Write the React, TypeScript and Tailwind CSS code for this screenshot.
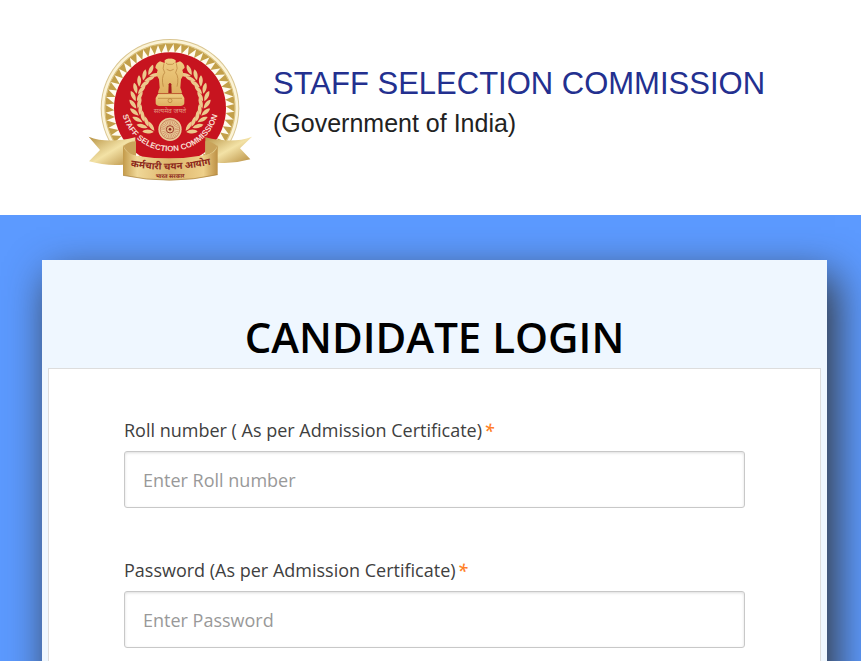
const teeth = Array.from({ length: 52 }, (_, i) => (i * 360) / 52);
const leaves = Array.from({ length: 10 }, (_, i) => i);

function Laurel() {
  return (
    <g fill="#ecc98c">
      {leaves.map((i) => (
        <g key={i} transform={`rotate(${30 + i * 12.5} 270 215)`}>
          <g transform="translate(270 316)">
            <path d="M3 2C-4 13 -14 20 -27 18C-24 8 -13 0 3 2Z" />
            <path d="M3 -2C-4 -13 -14 -19 -27 -18C-24 -8 -13 0 3 -2Z" />
          </g>
        </g>
      ))}
    </g>
  );
}

function Emblem() {
  return (
    <svg viewBox="0 0 540 480" className="h-40 w-[180px] shrink-0" role="img" aria-label="Staff Selection Commission emblem">
      <defs>
        <linearGradient id="ribbon" x1="0" x2="1" y1="0" y2="0">
          <stop offset="0" stopColor="#c39a4a" />
          <stop offset="0.15" stopColor="#f0d898" />
          <stop offset="0.5" stopColor="#dcb46c" />
          <stop offset="0.85" stopColor="#eed08a" />
          <stop offset="1" stopColor="#bd9044" />
        </linearGradient>
        <linearGradient id="tail" x1="0" x2="1" y1="0" y2="1">
          <stop offset="0" stopColor="#b79345" />
          <stop offset="0.5" stopColor="#f3e2a6" />
          <stop offset="1" stopColor="#b58a3c" />
        </linearGradient>
        <linearGradient id="lion" x1="0" x2="0" y1="0" y2="1">
          <stop offset="0" stopColor="#efce83" />
          <stop offset="1" stopColor="#dfb060" />
        </linearGradient>
        <clipPath id="disc">
          <rect width="540" height="392" />
        </clipPath>
        <path id="motto" d="M122 216A148 148 0 0 0 418 216" />
        <path id="hindi" d="M138 407Q270 434 406 400" />
        <path id="hindiSmall" d="M190 441Q270 448 350 440" />
      </defs>

      <g clipPath="url(#disc)">
        <circle cx="270" cy="235" r="208" fill="#d9c590" />
        <circle cx="270" cy="235" r="205" fill="#fbf3d6" />
        <circle cx="270" cy="235" r="197" fill="#d9bf78" />
        <circle cx="270" cy="235" r="194" fill="#fffbee" />
        {teeth.map((a) => (
          <path key={a} d="M257 41H281L264 68Z" fill="#c3a04a" transform={`rotate(${a} 270 235)`} />
        ))}
        <circle cx="270" cy="235" r="168" fill="#c7141f" />
      </g>

      <Laurel />
      <g transform="translate(540 0) scale(-1 1)">
        <Laurel />
      </g>

      <g fill="url(#lion)">
        <path d="M254 91Q260 85 270 86Q280 85 287 91L287 99L300 94Q313 101 314 113L307 120L311 134L303 148L301 173Q305 182 306 190H234Q235 182 239 173L237 148L229 134L233 120L226 113Q227 101 240 94L254 99Z" />
        <path d="M234 192H306L313 204L313 218Q314 225 303 228H237Q226 225 227 218L227 204Z" />
      </g>
      <g fill="none" stroke="#b57d38" strokeWidth="2">
        <path d="M252 100Q246 116 254 128Q243 142 250 170M289 100Q295 116 287 128Q298 142 291 170" />
        <path d="M258 99Q263 105 270 103Q278 105 283 99M260 118Q270 127 281 118" />
        <path d="M236 191H304M234 205H306" />
        <circle cx="270" cy="212" r="6" />
      </g>
      <path d="M266 163Q270 155 274 163L275 189H265Z" fill="#a51c1d" />

      <text x="270" y="250" textAnchor="middle" fill="#e39a85" fontSize="20" fontFamily="Noto Sans, sans-serif">
        सत्यमेव जयते
      </text>

      <circle cx="270" cy="298" r="39" fill="#c7141f" />
      <circle cx="270" cy="298" r="35" fill="#eacb99" />
      <circle cx="270" cy="298" r="29" fill="none" stroke="#b4603c" strokeWidth="2" />
      <circle cx="270" cy="298" r="20" fill="none" stroke="#c98b62" strokeWidth="13" strokeDasharray="2 3" />
      <circle cx="270" cy="298" r="11" fill="#e6bd88" stroke="#9d3d2b" strokeWidth="3" />
      <circle cx="270" cy="298" r="4" fill="#8c241f" />

      <text fill="#f7ddd0" fontSize="24" fontWeight="700" fontFamily="Liberation Sans, sans-serif">
        <textPath href="#motto" startOffset="50%" textAnchor="middle">
          STAFF SELECTION COMMISSION
        </textPath>
      </text>

      <path d="M26 320Q82 342 166 322V374L130 404Q76 408 27 394L60 360Z" fill="url(#tail)" />
      <path d="M516 320Q458 342 376 322V374L412 398Q462 402 511 388L480 355Z" fill="url(#tail)" />
      <path d="M130 348Q146 334 168 334V378Q140 370 130 348Z" fill="#c9a35a" />
      <path d="M412 348Q396 334 376 334V376Q402 370 412 348Z" fill="#c9a35a" />
      <path d="M129 345Q134 371 168 377Q270 394 378 375Q410 369 413 345V434Q270 466 129 436Z" fill="url(#ribbon)" />
      <path d="M129 436Q270 466 413 434" fill="none" stroke="#a47b35" strokeWidth="2" />
      <g fill="#8d291c" fontWeight="700" fontFamily="Noto Sans, sans-serif">
        <text fontSize="29">
          <textPath href="#hindi" startOffset="50%" textAnchor="middle">
            कर्मचारी चयन आयोग
          </textPath>
        </text>
        <text fontSize="17">
          <textPath href="#hindiSmall" startOffset="50%" textAnchor="middle">
            भारत सरकार
          </textPath>
        </text>
      </g>
    </svg>
  );
}

type FieldProps = {
  id: string;
  type: string;
  label: string;
  placeholder: string;
};

function Field({ id, type, label, placeholder }: FieldProps) {
  return (
    <div>
      <label htmlFor={id} className="block text-lg leading-6 text-[#404040]">
        {label}
        <em className="ml-0.5 font-semibold text-[#ff7f27]">*</em>
      </label>
      <input
        id={id}
        name={id}
        type={type}
        placeholder={placeholder}
        className="mt-[9px] block h-[57px] w-full rounded-[3px] border border-[#c8c8c8] bg-white px-[18px] text-lg text-[#404040] shadow-[inset_0_1px_3px_#dddddd] placeholder:text-[#999999]"
      />
    </div>
  );
}

export default function App() {
  return (
    <div className="flex min-h-screen flex-col bg-[#5c9aff] font-['Open_Sans',sans-serif]">
      <header className="flex h-[215px] items-start bg-white pt-[30px] pl-20">
        <Emblem />
        <div className="pt-8 pl-[13px] font-['Liberation_Sans',sans-serif]">
          <p className="text-[31px] leading-[44px] text-[#23308f]">STAFF SELECTION COMMISSION</p>
          <p className="text-[25px] leading-[34px] text-[#222222]">(Government of India)</p>
        </div>
      </header>

      <main className="flex grow flex-col overflow-hidden pt-[45px] pr-[34px] pl-[42px]">
        <section className="grow bg-[#eff7ff] px-1.5 pt-12 shadow-[8px_16px_40px_#333333]">
          <h1 className="pb-0.5 text-center text-[42px] leading-[58px] font-semibold text-black">CANDIDATE LOGIN</h1>
          <form className="flex flex-col gap-[50px] border border-[#dddddd] bg-white px-[75px] pt-[49px] pb-20">
            <Field id="roll" type="text" label="Roll number ( As per Admission Certificate)" placeholder="Enter Roll number" />
            <Field id="password" type="password" label="Password (As per Admission Certificate)" placeholder="Enter Password" />
          </form>
        </section>
      </main>
    </div>
  );
}
